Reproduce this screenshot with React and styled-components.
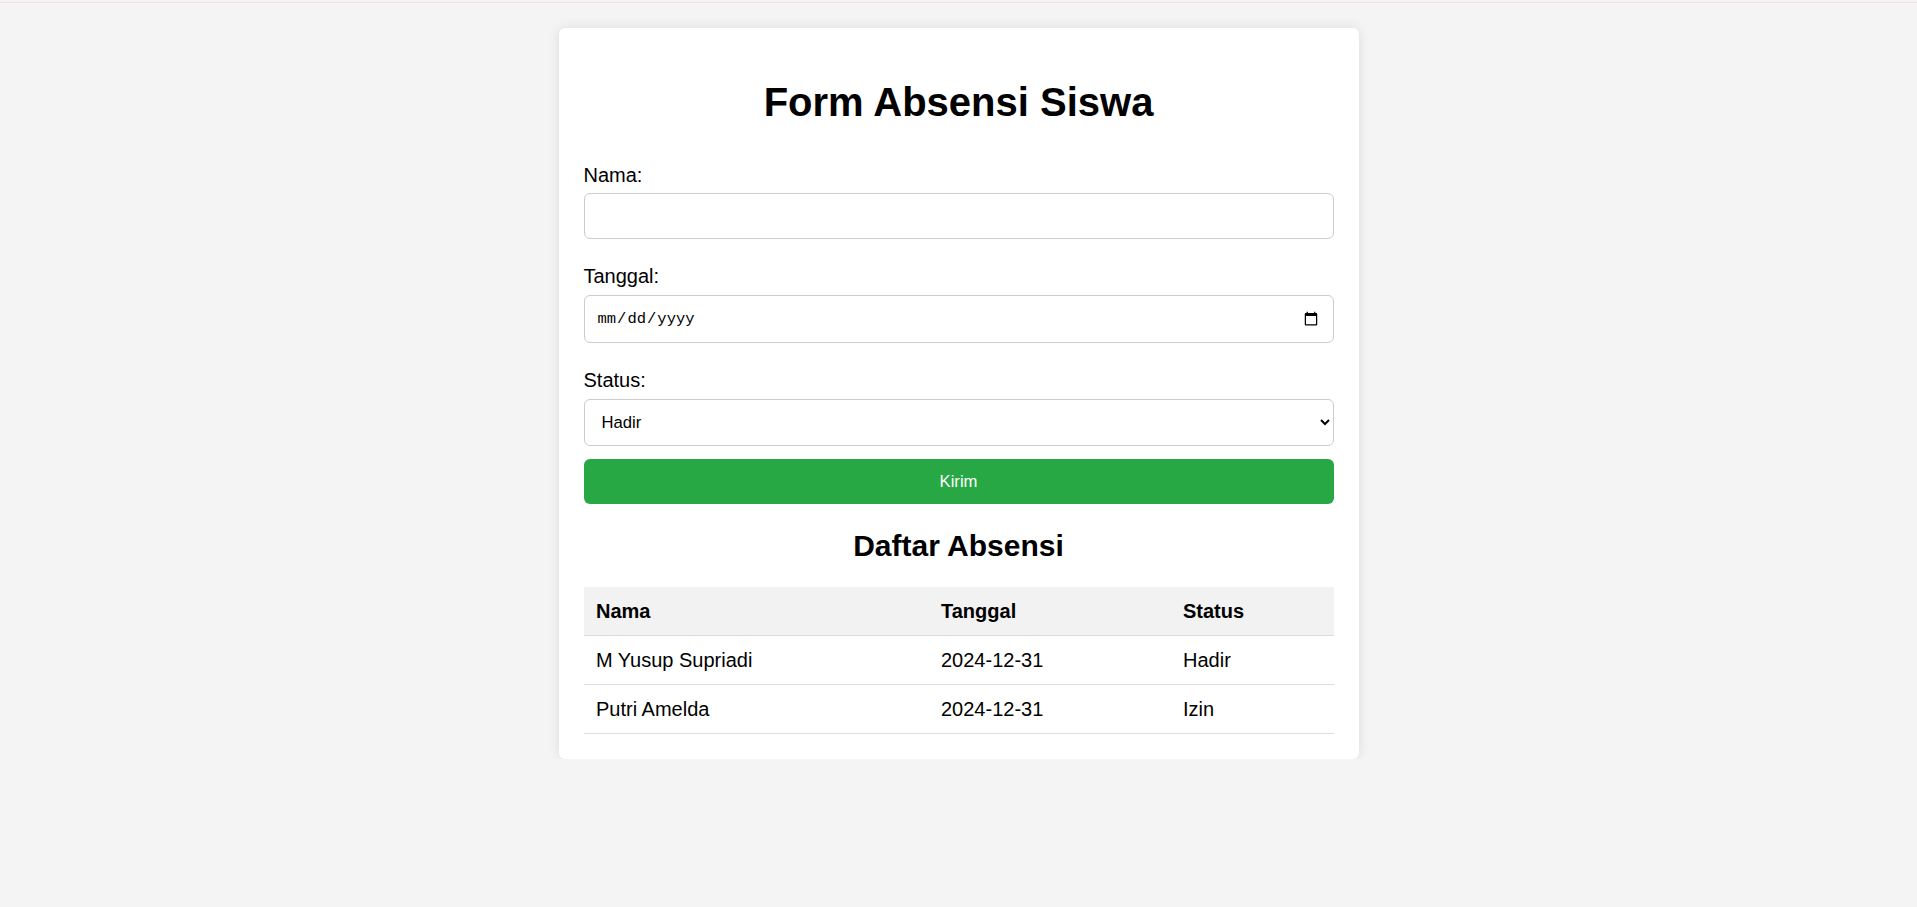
import React from 'react';
import styled, { createGlobalStyle } from 'styled-components';

const records = [
  { nama: 'M Yusup Supriadi', tanggal: '2024-12-31', status: 'Hadir' },
  { nama: 'Putri Amelda', tanggal: '2024-12-31', status: 'Izin' },
];

const App = () => {
  return (
    <>
      <GlobalStyle />
      <TopLine />
      <Card>
        <Title>Form Absensi Siswa</Title>
        <Form onSubmit={(e) => e.preventDefault()}>
          <Label htmlFor="nama">Nama:</Label>
          <TextInput id="nama" type="text" />

          <Label htmlFor="tanggal">Tanggal:</Label>
          <DateInput id="tanggal" type="date" />

          <Label htmlFor="status">Status:</Label>
          <Select id="status" defaultValue="Hadir">
            <option>Hadir</option>
            <option>Izin</option>
            <option>Sakit</option>
            <option>Alpa</option>
          </Select>

          <SubmitButton type="submit">Kirim</SubmitButton>
        </Form>

        <SubTitle>Daftar Absensi</SubTitle>
        <Table>
          <thead>
            <tr>
              <Th $width="320px">Nama</Th>
              <Th $width="217px">Tanggal</Th>
              <Th>Status</Th>
            </tr>
          </thead>
          <tbody>
            {records.map((r) => (
              <tr key={r.nama}>
                <Td>{r.nama}</Td>
                <Td>{r.tanggal}</Td>
                <Td>{r.status}</Td>
              </tr>
            ))}
          </tbody>
        </Table>
      </Card>
    </>
  );
};

export default App;

const GlobalStyle = createGlobalStyle`
  body {
    margin: 0;
    background: #f4f4f4;
    font-family: "Liberation Sans", Arial, sans-serif;
    color: #000;
  }
`;

const TopLine = styled.div`
  height: 1px;
  margin-top: 2px;
  background: #fadfe2;
`;

const Card = styled.div`
  box-sizing: border-box;
  width: 800px;
  margin: 25px auto 0;
  padding: 25px;
  background: #fff;
  border-radius: 6px;
  box-shadow: 0 0 12px rgba(0, 0, 0, 0.1);
`;

const Title = styled.h1`
  margin: 27px 0 39px;
  font-size: 40px;
  font-weight: 700;
  text-align: center;
`;

const Form = styled.form`
  display: flex;
  flex-direction: column;
`;

const Label = styled.label`
  display: block;
  margin-bottom: 6px;
  font-size: 20px;
  line-height: 23px;
`;

const TextInput = styled.input`
  box-sizing: border-box;
  width: 100%;
  height: 46px;
  margin: 0 0 26px;
  padding: 0 12px;
  border: 1px solid #ccc;
  border-radius: 6px;
  background: #fff;
  font-family: "Liberation Sans", Arial, sans-serif;
  font-size: 16.67px;
  outline: none;
`;

const DateInput = styled(TextInput)`
  height: 48px;
  margin-top: 1px;
  font-family: "Liberation Mono", "DejaVu Sans Mono", monospace;
  font-size: 15.5px;
`;

const Select = styled.select`
  box-sizing: border-box;
  width: 100%;
  height: 47px;
  margin: 1px 0 13px;
  padding: 0 10px 0 13px;
  border: 1px solid #ccc;
  border-radius: 6px;
  background: #fff;
  color: #000;
  font-family: "Liberation Sans", Arial, sans-serif;
  font-size: 16.67px;
`;

const SubmitButton = styled.button`
  box-sizing: border-box;
  width: 100%;
  height: 45px;
  padding: 0;
  border: none;
  border-radius: 6px;
  background: #28a745;
  color: #fff;
  font-family: "Liberation Sans", Arial, sans-serif;
  font-size: 16.67px;
  cursor: pointer;
`;

const SubTitle = styled.h2`
  margin: 25px 0 24px;
  font-size: 30px;
  font-weight: 700;
  text-align: center;
`;

const Table = styled.table`
  width: 100%;
  table-layout: fixed;
  border-collapse: collapse;
  font-size: 20px;
`;

const Th = styled.th`
  width: ${(p) => p.$width || 'auto'};
  padding: 12.5px;
  background: #f2f2f2;
  border-bottom: 1px solid #ddd;
  text-align: left;
  font-weight: 700;
  line-height: 23px;
`;

const Td = styled.td`
  padding: 12.5px;
  border-bottom: 1px solid #ddd;
  text-align: left;
  line-height: 23px;
`;
